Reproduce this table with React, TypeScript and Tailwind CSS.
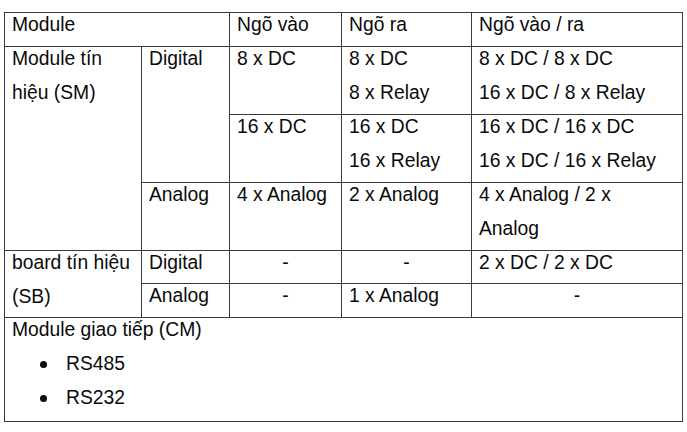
import React from "react";

const font = { fontFamily: '"Liberation Sans", Arial, sans-serif' };

function Cell({
  className = "",
  children,
  center = false,
}: {
  className?: string;
  children?: React.ReactNode;
  center?: boolean;
}) {
  return (
    <div className={`bg-white px-[7px] leading-[34px] whitespace-nowrap ${center ? "text-center" : ""} ${className}`}>
      <div className="mt-[-5px]">{children}</div>
    </div>
  );
}

export default function App() {
  return (
    <div className="w-[687px] h-[432px] bg-white overflow-hidden" style={font}>
      <div className="pt-[12px] pl-[4px]">
        <div className="grid w-[679px] grid-cols-[136px_87px_111px_129px_210px] grid-rows-[33px_67px_67px_67px_32px_33px_103px] gap-px p-px bg-[#3a3a3a] text-[19.3px] text-[#0a0a0a]">
          {/* header */}
          <Cell className="col-span-2">Module</Cell>
          <Cell>Ngõ vào</Cell>
          <Cell>Ngõ ra</Cell>
          <Cell>Ngõ vào / ra</Cell>

          {/* SM */}
          <Cell className="row-span-3">
            Module tín
            <br />
            hiệu (SM)
          </Cell>
          <Cell className="row-span-2">Digital</Cell>
          <Cell>8 x DC</Cell>
          <Cell>
            8 x DC
            <br />8 x Relay
          </Cell>
          <Cell>
            8 x DC / 8 x DC
            <br />
            16 x DC / 8 x Relay
          </Cell>

          <Cell>16 x DC</Cell>
          <Cell>
            16 x DC
            <br />
            16 x Relay
          </Cell>
          <Cell>
            16 x DC / 16 x DC
            <br />
            16 x DC / 16 x Relay
          </Cell>

          <Cell>Analog</Cell>
          <Cell>4 x Analog</Cell>
          <Cell>2 x Analog</Cell>
          <Cell>
            4 x Analog / 2 x
            <br />
            Analog
          </Cell>

          {/* SB */}
          <Cell className="row-span-2">
            board tín hiệu
            <br />
            (SB)
          </Cell>
          <Cell>Digital</Cell>
          <Cell center>-</Cell>
          <Cell center>-</Cell>
          <Cell>2 x DC / 2 x DC</Cell>

          <Cell>Analog</Cell>
          <Cell center>-</Cell>
          <Cell>1 x Analog</Cell>
          <Cell center>-</Cell>

          {/* CM */}
          <Cell className="col-span-5">
            <div>Module giao tiếp (CM)</div>
            <ul>
              <li className="flex items-center">
                <span className="ml-[28px] mr-[19px] mt-[1px] h-[7px] w-[7px] rounded-full bg-[#0a0a0a]" />
                <span>RS485</span>
              </li>
              <li className="flex items-center">
                <span className="ml-[28px] mr-[19px] mt-[1px] h-[7px] w-[7px] rounded-full bg-[#0a0a0a]" />
                <span>RS232</span>
              </li>
            </ul>
          </Cell>
        </div>
      </div>
    </div>
  );
}
